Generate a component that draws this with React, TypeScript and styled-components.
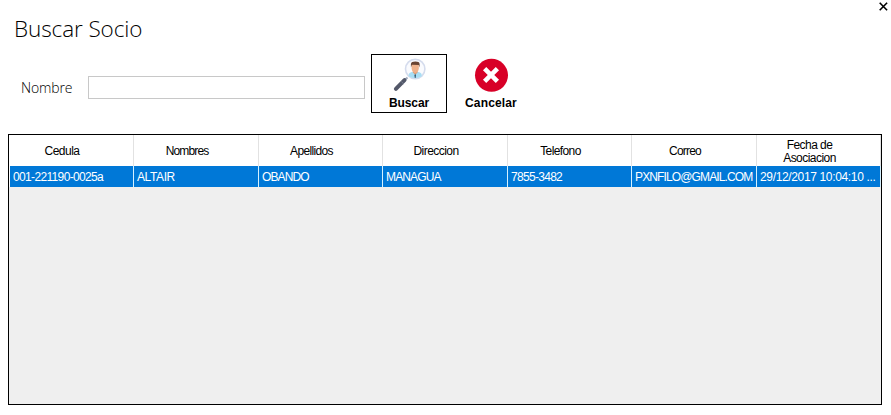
import React from "react";
import styled, { createGlobalStyle } from "styled-components";

const GlobalStyle = createGlobalStyle`
  * { box-sizing: border-box; }
  body { margin: 0; background: #fff; overflow: hidden; }
`;

const Window = styled.main`
  position: relative;
  display: flex;
  flex-direction: column;
  width: 891px;
  height: 415px;
  padding: 14px 9px 10px 8px;
  background: #fff;
  color: #000;
  font-family: "Liberation Sans", sans-serif;
`;

const CloseButton = styled.button`
  position: absolute;
  top: 2px;
  right: 3px;
  display: flex;
  padding: 0;
  border: 0;
  background: none;
`;

const Title = styled.h1`
  height: 30px;
  margin: 0 0 10px 6px;
  font: 300 22.5px/30px "Open Sans", sans-serif;
  letter-spacing: -0.1px;
  white-space: nowrap;
`;

const SearchBar = styled.form`
  display: flex;
  height: 59px;
  margin: 0 0 21px 13px;
`;

const FieldLabel = styled.label`
  width: 67px;
  padding-top: 24px;
  font: 300 14px/20px "Open Sans", sans-serif;
  letter-spacing: -0.15px;
`;

const TextField = styled.input`
  width: 277px;
  height: 23px;
  margin: 22px 6px 0 0;
  padding: 0 4px;
  border: 1px solid #c8c8c8;
  outline: none;
`;

const ActionButton = styled.button<{ $framed?: boolean }>`
  display: flex;
  flex-direction: column;
  align-items: center;
  width: 76px;
  height: 59px;
  margin-right: 6px;
  padding: ${(p) => (p.$framed ? "3px 0 0" : "4px 0 0")};
  border: ${(p) => (p.$framed ? "1px solid #000" : "0")};
  background: #fff;
  color: #000;
  font: bold 12px/14px "Liberation Sans", sans-serif;
  letter-spacing: ${(p) => (p.$framed ? "-0.1px" : "0.15px")};
  white-space: nowrap;

  svg { display: block; margin-bottom: 4px; }
`;

const Grid = styled.div`
  width: 874px;
  height: 271px;
  border: 1px solid #000;
  background: #efefef;
`;

const GridRow = styled.div`
  display: grid;
  grid-template-columns: 125px 125px 124px 125px 124px 125px 124px;
`;

const HeaderCell = styled.div<{ $spacing: number }>`
  display: flex;
  align-items: center;
  justify-content: center;
  height: 31px;
  padding: 2px 18px 0 0;
  border-right: 1px solid #e2e2e2;
  background: #fff;
  font-size: 12px;
  line-height: 13px;
  letter-spacing: ${(p) => p.$spacing}px;
  text-align: center;
  white-space: pre-line;
`;

const DataCell = styled.div<{ $spacing: number }>`
  height: 21px;
  padding: 1px 0 0 3px;
  border-right: 1px solid #d5f1ff;
  background: #0078d7;
  color: #fff;
  font-size: 12px;
  line-height: 20px;
  letter-spacing: ${(p) => p.$spacing}px;
  white-space: nowrap;
  overflow: hidden;

  &:first-child { border-left: 1px solid #fff; }
`;

const columns = [
  { title: "Cedula", value: "001-221190-0025a", titleSpacing: -0.5, spacing: -0.65 },
  { title: "Nombres", value: "ALTAIR", titleSpacing: -0.85, spacing: -0.4 },
  { title: "Apellidos", value: "OBANDO", titleSpacing: -0.65, spacing: -0.9 },
  { title: "Direccion", value: "MANAGUA", titleSpacing: -0.55, spacing: -0.85 },
  { title: "Telefono", value: "7855-3482", titleSpacing: -0.6, spacing: -0.7 },
  { title: "Correo", value: "PXNFILO@GMAIL.COM", titleSpacing: -0.8, spacing: -0.87 },
  { title: "Fecha de\nAsociacion", value: "29/12/2017 10:04:10 ...", titleSpacing: -0.55, spacing: -0.35 },
];

const SearchPersonIcon = () => (
  <svg width="34" height="34" viewBox="-0.7 0 34 34">
    <path d="m14.8 19.5-3.2 3" stroke="#9fa9bb" strokeWidth="2" />
    <path d="m11.8 22.2-8.6 8.6" stroke="#535869" strokeWidth="4" strokeLinecap="round" />
    <path d="m8.7 23.6 2.6 2.6" stroke="#7c8292" strokeWidth="1" />
    <circle cx="22.5" cy="11" r="9.7" fill="#fafbfe" stroke="#d5dced" strokeWidth="1.6" />
    <path d="M16 18.2v-1.5q0-2 4-3h5q4 1 4 3v1.5q-6.5 4-13 0Z" fill="#a9def4" />
    <path d="M20.2 12.5h4.6v2.3l-2.3 1.8-2.3-1.8Z" fill="#dc9b74" />
    <path d="m22.5 16-.8 1 .4 3h.8l.4-3Z" fill="#35556d" />
    <path d="M18.9 6h7.2v4.5q-.4 3.8-3.6 4.5-3.2-.7-3.6-4.5Z" fill="#efb28c" />
    <path d="M18.2 9.5V6q.4-2.4 4.5-2.4 4 0 4.2 2.4v3.5L26 7.1l-6.8-.3Z" fill="#684332" />
  </svg>
);

const CancelIcon = () => (
  <svg width="34" height="34" viewBox="0 0 34 34">
    <circle cx="17.5" cy="17.3" r="16.5" fill="#d80027" />
    <path d="m10.6 10.6 12.8 12.8m0-12.8L10.6 23.4" stroke="#fff" strokeWidth="4.6" />
  </svg>
);

const CloseIcon = () => (
  <svg width="9" height="9" viewBox="0 0 9 9">
    <path d="m.7.7 7.4 7.6M8.1.7.7 8.3" stroke="#000" strokeWidth="1.6" />
  </svg>
);

export default function App() {
  return (
    <>
      <GlobalStyle />
      <Window>
        <CloseButton aria-label="Cerrar"><CloseIcon /></CloseButton>
        <Title>Buscar Socio</Title>
        <SearchBar onSubmit={(event) => event.preventDefault()}>
          <FieldLabel htmlFor="nombre">Nombre</FieldLabel>
          <TextField id="nombre" />
          <ActionButton $framed type="submit"><SearchPersonIcon />Buscar</ActionButton>
          <ActionButton type="button"><CancelIcon />Cancelar</ActionButton>
        </SearchBar>
        <Grid>
          <GridRow>
            {columns.map((c) => <HeaderCell key={c.title} $spacing={c.titleSpacing}>{c.title}</HeaderCell>)}
          </GridRow>
          <GridRow>
            {columns.map((c) => <DataCell key={c.title} $spacing={c.spacing}>{c.value}</DataCell>)}
          </GridRow>
        </Grid>
      </Window>
    </>
  );
}
